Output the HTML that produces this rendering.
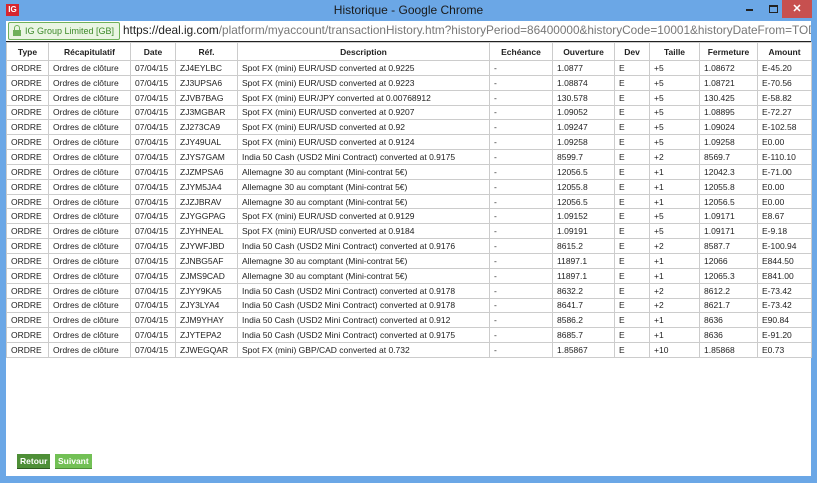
<!DOCTYPE html>
<html><head><meta charset="utf-8"><style>
*{box-sizing:border-box;margin:0;padding:0}
body{width:817px;height:483px;background:#6ba7e6;font-family:"Liberation Sans",Arial,sans-serif;position:relative;overflow:hidden}
.title{position:absolute;top:0;left:0;width:817px;height:21px}
.logo{position:absolute;left:6px;top:4px;width:13px;height:12px;background:#d7262f;color:#fff;font-size:8px;font-weight:bold;line-height:12px;text-align:center}
.ttxt{position:absolute;left:0;width:817px;top:3px;text-align:center;font-size:12px;color:#1a1a1a}
.min{position:absolute;left:746px;top:9px;width:7px;height:2px;background:#222}
.max{position:absolute;left:769px;top:5px;width:9px;height:8px;border:1px solid #222;border-top-width:2px}
.close{position:absolute;left:782px;top:0;width:30px;height:18px;background:#c7504f;color:#fff;text-align:center;font-size:11px;line-height:18px;font-weight:bold}
.addr{position:absolute;left:6px;top:21px;width:805px;height:21px;background:#fff;border-bottom:1px solid #222;overflow:hidden}
.badge{position:absolute;left:2px;top:1px;height:18px;width:112px;border:1px solid #6fb05a;background:#eaf5e3;color:#3d8a2a;font-size:9px;line-height:17px;padding-left:16px;border-radius:2px}
.badge:before{content:"";position:absolute;left:4px;top:7px;width:8px;height:6px;background:#6fb05a}
.badge:after{content:"";position:absolute;left:5px;top:2px;width:4px;height:5px;border:1px solid #6fb05a;border-bottom:none;border-radius:3px 3px 0 0}
.url{position:absolute;left:117px;top:2px;font-size:11.8px;color:#777;white-space:nowrap}
.url b{font-weight:normal;color:#222}
.page{position:absolute;left:6px;top:42px;width:805px;height:434px;background:#fff}
table{border-collapse:collapse;font-size:8.5px;color:#222;position:absolute;left:0;top:0;width:805px;table-layout:fixed}
td,th{border:1px solid #ccc;padding:0 4px;white-space:nowrap;overflow:hidden;height:14.85px;line-height:10px}
th{font-weight:bold;text-align:center;height:18px}
.btn{position:absolute;top:412px;height:15px;font-size:8.5px;font-weight:bold;color:#fff;line-height:15px;padding:0 3px;border-bottom:1px solid #2d5a1e}
</style></head><body>
<div class="title"><div class="logo">IG</div><div class="ttxt">Historique - Google Chrome</div><div class="min"></div><div class="max"></div><div class="close">✕</div></div>
<div class="addr"><div class="badge">IG Group Limited [GB]</div><div class="url"><b>https://deal.ig.com</b>/platform/myaccount/transactionHistory.htm?historyPeriod=86400000&amp;historyCode=10001&amp;historyDateFrom=TODAY&amp;</div></div>
<div class="page">
<table>
<colgroup><col style="width:42px"><col style="width:82px"><col style="width:45px"><col style="width:62px"><col style="width:252px"><col style="width:63px"><col style="width:62px"><col style="width:35px"><col style="width:50px"><col style="width:58px"><col style="width:54px"></colgroup>
<tr><th>Type</th><th>Récapitulatif</th><th>Date</th><th>Réf.</th><th>Description</th><th>Echéance</th><th>Ouverture</th><th>Dev</th><th>Taille</th><th>Fermeture</th><th>Amount</th></tr>
<tr><td>ORDRE</td><td>Ordres de clôture</td><td>07/04/15</td><td>ZJ4EYLBC</td><td>Spot FX (mini) EUR/USD converted at 0.9225</td><td>-</td><td>1.0877</td><td>E</td><td>+5</td><td>1.08672</td><td>E-45.20</td></tr>
<tr><td>ORDRE</td><td>Ordres de clôture</td><td>07/04/15</td><td>ZJ3UPSA6</td><td>Spot FX (mini) EUR/USD converted at 0.9223</td><td>-</td><td>1.08874</td><td>E</td><td>+5</td><td>1.08721</td><td>E-70.56</td></tr>
<tr><td>ORDRE</td><td>Ordres de clôture</td><td>07/04/15</td><td>ZJVB7BAG</td><td>Spot FX (mini) EUR/JPY converted at 0.00768912</td><td>-</td><td>130.578</td><td>E</td><td>+5</td><td>130.425</td><td>E-58.82</td></tr>
<tr><td>ORDRE</td><td>Ordres de clôture</td><td>07/04/15</td><td>ZJ3MGBAR</td><td>Spot FX (mini) EUR/USD converted at 0.9207</td><td>-</td><td>1.09052</td><td>E</td><td>+5</td><td>1.08895</td><td>E-72.27</td></tr>
<tr><td>ORDRE</td><td>Ordres de clôture</td><td>07/04/15</td><td>ZJ273CA9</td><td>Spot FX (mini) EUR/USD converted at 0.92</td><td>-</td><td>1.09247</td><td>E</td><td>+5</td><td>1.09024</td><td>E-102.58</td></tr>
<tr><td>ORDRE</td><td>Ordres de clôture</td><td>07/04/15</td><td>ZJY49UAL</td><td>Spot FX (mini) EUR/USD converted at 0.9124</td><td>-</td><td>1.09258</td><td>E</td><td>+5</td><td>1.09258</td><td>E0.00</td></tr>
<tr><td>ORDRE</td><td>Ordres de clôture</td><td>07/04/15</td><td>ZJYS7GAM</td><td>India 50 Cash (USD2 Mini Contract) converted at 0.9175</td><td>-</td><td>8599.7</td><td>E</td><td>+2</td><td>8569.7</td><td>E-110.10</td></tr>
<tr><td>ORDRE</td><td>Ordres de clôture</td><td>07/04/15</td><td>ZJZMPSA6</td><td>Allemagne 30 au comptant (Mini-contrat 5€)</td><td>-</td><td>12056.5</td><td>E</td><td>+1</td><td>12042.3</td><td>E-71.00</td></tr>
<tr><td>ORDRE</td><td>Ordres de clôture</td><td>07/04/15</td><td>ZJYM5JA4</td><td>Allemagne 30 au comptant (Mini-contrat 5€)</td><td>-</td><td>12055.8</td><td>E</td><td>+1</td><td>12055.8</td><td>E0.00</td></tr>
<tr><td>ORDRE</td><td>Ordres de clôture</td><td>07/04/15</td><td>ZJZJBRAV</td><td>Allemagne 30 au comptant (Mini-contrat 5€)</td><td>-</td><td>12056.5</td><td>E</td><td>+1</td><td>12056.5</td><td>E0.00</td></tr>
<tr><td>ORDRE</td><td>Ordres de clôture</td><td>07/04/15</td><td>ZJYGGPAG</td><td>Spot FX (mini) EUR/USD converted at 0.9129</td><td>-</td><td>1.09152</td><td>E</td><td>+5</td><td>1.09171</td><td>E8.67</td></tr>
<tr><td>ORDRE</td><td>Ordres de clôture</td><td>07/04/15</td><td>ZJYHNEAL</td><td>Spot FX (mini) EUR/USD converted at 0.9184</td><td>-</td><td>1.09191</td><td>E</td><td>+5</td><td>1.09171</td><td>E-9.18</td></tr>
<tr><td>ORDRE</td><td>Ordres de clôture</td><td>07/04/15</td><td>ZJYWFJBD</td><td>India 50 Cash (USD2 Mini Contract) converted at 0.9176</td><td>-</td><td>8615.2</td><td>E</td><td>+2</td><td>8587.7</td><td>E-100.94</td></tr>
<tr><td>ORDRE</td><td>Ordres de clôture</td><td>07/04/15</td><td>ZJNBG5AF</td><td>Allemagne 30 au comptant (Mini-contrat 5€)</td><td>-</td><td>11897.1</td><td>E</td><td>+1</td><td>12066</td><td>E844.50</td></tr>
<tr><td>ORDRE</td><td>Ordres de clôture</td><td>07/04/15</td><td>ZJMS9CAD</td><td>Allemagne 30 au comptant (Mini-contrat 5€)</td><td>-</td><td>11897.1</td><td>E</td><td>+1</td><td>12065.3</td><td>E841.00</td></tr>
<tr><td>ORDRE</td><td>Ordres de clôture</td><td>07/04/15</td><td>ZJYY9KA5</td><td>India 50 Cash (USD2 Mini Contract) converted at 0.9178</td><td>-</td><td>8632.2</td><td>E</td><td>+2</td><td>8612.2</td><td>E-73.42</td></tr>
<tr><td>ORDRE</td><td>Ordres de clôture</td><td>07/04/15</td><td>ZJY3LYA4</td><td>India 50 Cash (USD2 Mini Contract) converted at 0.9178</td><td>-</td><td>8641.7</td><td>E</td><td>+2</td><td>8621.7</td><td>E-73.42</td></tr>
<tr><td>ORDRE</td><td>Ordres de clôture</td><td>07/04/15</td><td>ZJM9YHAY</td><td>India 50 Cash (USD2 Mini Contract) converted at 0.912</td><td>-</td><td>8586.2</td><td>E</td><td>+1</td><td>8636</td><td>E90.84</td></tr>
<tr><td>ORDRE</td><td>Ordres de clôture</td><td>07/04/15</td><td>ZJYTEPA2</td><td>India 50 Cash (USD2 Mini Contract) converted at 0.9175</td><td>-</td><td>8685.7</td><td>E</td><td>+1</td><td>8636</td><td>E-91.20</td></tr>
<tr><td>ORDRE</td><td>Ordres de clôture</td><td>07/04/15</td><td>ZJWEGQAR</td><td>Spot FX (mini) GBP/CAD converted at 0.732</td><td>-</td><td>1.85867</td><td>E</td><td>+10</td><td>1.85868</td><td>E0.73</td></tr>
</table>
<div class="btn" style="left:11px;background:#4e8f37">Retour</div>
<div class="btn" style="left:49px;background:#72c055;border-bottom-color:#4e8f37">Suivant</div>
</div>
</body></html>
